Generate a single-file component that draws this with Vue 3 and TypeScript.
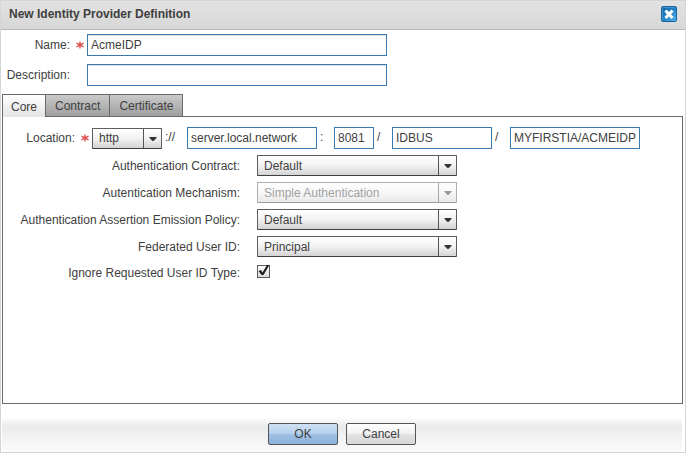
<script setup lang="ts">
import { ref } from 'vue'

interface Choice {
  id: string
  label: string
  value: string
  disabled?: boolean
}

const name = ref('AcmeIDP')
const description = ref('')
const tabs: string[] = ['Core', 'Contract', 'Certificate']
const activeTab = ref('Core')
const protocol = ref('http')
const host = ref('server.local.network')
const port = ref('8081')
const context = ref('IDBUS')
const path = ref('MYFIRSTIA/ACMEIDP')
const ignoreType = ref(true)

const choices = ref<Choice[]>([
  { id: 'contract', label: 'Authentication Contract:', value: 'Default' },
  { id: 'mechanism', label: 'Autentication Mechanism:', value: 'Simple Authentication', disabled: true },
  { id: 'policy', label: 'Authentication Assertion Emission Policy:', value: 'Default' },
  { id: 'userid', label: 'Federated User ID:', value: 'Principal' },
])
</script>

<template>
  <form class="dialog" @submit.prevent>
    <header class="title-bar">
      <h1>New Identity Provider Definition</h1>
      <button type="button" class="close" aria-label="Close">
        <svg viewBox="0 0 16 16" width="16" height="16">
          <defs>
            <linearGradient id="close-fill" x1="0" y1="0" x2="1" y2="1">
              <stop offset="0" stop-color="#0b5a9c" />
              <stop offset="0.5" stop-color="#2684c6" />
              <stop offset="1" stop-color="#55b4e6" />
            </linearGradient>
          </defs>
          <rect x="0.5" y="0.5" width="15" height="15" rx="1.5" fill="url(#close-fill)" stroke="#1766a6" />
          <path d="M1.5 14V1.5H14" fill="none" stroke="#5ba3d4" stroke-opacity="0.6" />
          <path d="M4.500 4.500L11.500 12M11.500 4.500L4.500 12" stroke="#fff" stroke-width="3" />
        </svg>
      </button>
    </header>

    <div class="identity">
      <div class="identity-row">
        <label for="name">Name:</label>
        <span class="required">
          <svg viewBox="0 0 8 8" width="8" height="8"><path d="M4 .5V7.500M.5 2.200L7.500 5.800M7.500 2.200L.5 5.800" /></svg>
        </span>
        <input id="name" v-model="name" type="text" class="field" />
      </div>
      <div class="identity-row">
        <label for="description">Description:</label>
        <span class="required"></span>
        <input id="description" v-model="description" type="text" class="field" />
      </div>
    </div>

    <div class="tabs" role="tablist">
      <button
        v-for="tab in tabs"
        :key="tab"
        type="button"
        role="tab"
        class="tab"
        :class="{ active: tab === activeTab }"
        :aria-selected="tab === activeTab"
        @click="activeTab = tab"
      >{{ tab }}</button>
    </div>

    <section class="panel" role="tabpanel">
      <div class="location">
        <label for="protocol">Location:</label>
        <span class="required">
          <svg viewBox="0 0 8 8" width="8" height="8"><path d="M4 .5V7.500M.5 2.200L7.500 5.800M7.500 2.200L.5 5.800" /></svg>
        </span>
        <span class="drop protocol">
          <select id="protocol" v-model="protocol">
            <option>http</option>
            <option>https</option>
          </select>
          <svg class="arrow" viewBox="0 0 8 5" width="8" height="5"><path d="M.5 0H7.500V1L4.500 4H3.500L.5 1Z" /></svg>
        </span>
        <span class="mark scheme">://</span>
        <input v-model="host" type="text" class="field host" aria-label="Host" />
        <span class="mark colon">:</span>
        <input v-model="port" type="text" class="field port" aria-label="Port" />
        <span class="mark">/</span>
        <input v-model="context" type="text" class="field context" aria-label="Context" />
        <span class="mark">/</span>
        <input v-model="path" type="text" class="field host" aria-label="Path" />
      </div>

      <div class="options">
        <template v-for="choice in choices" :key="choice.id">
          <label :for="choice.id">{{ choice.label }}</label>
          <span class="drop" :class="{ disabled: choice.disabled }">
            <select :id="choice.id" v-model="choice.value" :disabled="choice.disabled">
              <option>{{ choice.value }}</option>
            </select>
            <svg class="arrow" viewBox="0 0 8 5" width="8" height="5"><path d="M.5 0H7.500V1L4.500 4H3.500L.5 1Z" /></svg>
          </span>
        </template>
        <label for="ignore">Ignore Requested User ID Type:</label>
        <span class="check">
          <input id="ignore" v-model="ignoreType" type="checkbox" />
          <svg v-if="ignoreType" viewBox="0 0 13 13" width="13" height="13"><path d="M1.500 6L4 5L5.500 7.500L10 0H12.500L6.500 10H4.500Z" /></svg>
        </span>
      </div>
    </section>

    <footer class="actions">
      <button type="submit" class="action primary">OK</button>
      <button type="button" class="action">Cancel</button>
    </footer>
  </form>
</template>

<style>
body {
  margin: 0;
  background: #fff;
}
</style>

<style scoped>
* {
  box-sizing: border-box;
}

.dialog,
.dialog button,
.dialog input,
.dialog select {
  font-family: "Liberation Sans", Arial, sans-serif;
  font-size: 12px;
  line-height: 14px;
  color: #404040;
}

.dialog {
  display: flex;
  flex-direction: column;
  min-height: 100vh;
  border: 1px solid #d5d5d5;
  background: #fff;
}

.title-bar {
  display: flex;
  align-items: center;
  justify-content: space-between;
  height: 29px;
  padding: 0 8px;
  border-bottom: 1px solid #bababa;
  background: linear-gradient(#e2e2e2, #d7d7d7);
}

h1 {
  margin: 0;
  padding-bottom: 2px;
  font-size: 12px;
  line-height: 14px;
}

.close {
  display: flex;
  margin-bottom: 2px;
  padding: 0;
  border: 0;
  background: none;
}

.identity {
  display: grid;
  gap: 8px;
  padding: 4px 0 8px;
}

.identity-row {
  display: flex;
  align-items: center;
}

.identity-row label {
  width: 69px;
  text-align: right;
}

.required {
  display: flex;
  justify-content: center;
  width: 17px;
  padding-left: 3px;
}

.required path {
  fill: none;
  stroke: #dc4a48;
  stroke-width: 1.3;
}

.field {
  width: 300px;
  height: 22px;
  padding: 0 3px;
  border: 1px solid #387ab0;
  border-radius: 0;
  outline: 0;
  background: #fff;
  box-shadow: inset 0 1px #dcdcdc;
}

.tabs {
  display: flex;
  padding-left: 1px;
}

.tab {
  height: 22px;
  padding: 0 9px;
  border: 1px solid #696969;
  border-left: 0;
  border-bottom: 0;
  background: linear-gradient(#cacaca, #9f9f9f);
}

.tab.active {
  position: relative;
  height: 23px;
  margin-bottom: -1px;
  padding: 2px 8px 0;
  border-left: 1px solid #696969;
  background: linear-gradient(#fff, #e4e4e4);
}

.panel {
  flex: 1;
  margin: 0 2px 0 1px;
  padding: 10px 12px;
  border: 1px solid #696969;
}

.location {
  display: flex;
  align-items: center;
}

.location label {
  width: 60px;
  text-align: right;
}

.mark {
  width: 18px;
  padding: 0 0 2px 3px;
}

.scheme {
  width: 25px;
}

.colon {
  width: 17px;
}

.location .field {
  box-shadow: none;
}

.location .host {
  width: 130px;
}

.location .port {
  width: 40px;
}

.location .context {
  width: 100px;
}

.drop {
  position: relative;
  display: flex;
  width: 200px;
}

.drop.protocol {
  width: 70px;
}

.drop select {
  width: 100%;
  height: 21px;
  padding: 0 24px 0 6px;
  border: 1px solid #5e5e5e;
  border-bottom-color: #3f3f3f;
  border-radius: 1px;
  outline: 0;
  appearance: none;
  background:
    linear-gradient(#555, #555) right 17px top 0 / 1px 100% no-repeat,
    linear-gradient(#fff, #f2f2f2 50%, #d4d4d4);
}

.drop.disabled {
  opacity: 0.5;
}

.drop.disabled select {
  opacity: 1;
}

.arrow {
  position: absolute;
  top: 9px;
  right: 5px;
  fill: #333;
  pointer-events: none;
}

.options {
  display: grid;
  grid-template-columns: 225px 200px;
  align-items: center;
  column-gap: 17px;
  row-gap: 6px;
  padding-top: 6px;
}

.options label {
  text-align: right;
}

.check {
  position: relative;
  display: flex;
  padding: 2px 0 4px;
}

.check input {
  width: 13px;
  height: 13px;
  margin: 0;
  border: 1px solid #5a5a5a;
  appearance: none;
  background: linear-gradient(#fff, #dcdcdc);
}

.check svg {
  position: absolute;
  top: 2px;
  left: 0;
  fill: #222;
  pointer-events: none;
}

.actions {
  display: flex;
  justify-content: center;
  gap: 8px;
  margin-right: 3px;
  margin-left: 1px;
  padding: 19px 0 7px;
  background: linear-gradient(#fff 13px, #e9ebea 22px, #fbfbfb);
}

.action {
  width: 70px;
  height: 22px;
  padding: 0;
  border: 1px solid #555;
  border-radius: 2px;
  background: linear-gradient(#fff, #f1f1f1 50%, #e2e2e2 50%, #d8d8d8);
}

.action.primary {
  background: linear-gradient(#cfe0f3, #b4cfeb 50%, #9fc0e4 50%, #8fb2dc);
}
</style>
